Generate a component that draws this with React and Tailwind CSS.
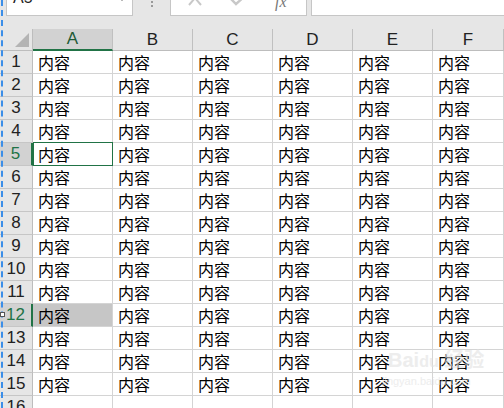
import React from "react";

const cols = ["A", "B", "C", "D", "E", "F"];
const rows = Array.from({ length: 16 }, (_, i) => i + 1);

export default function App() {
  return (
    <div
      className="relative w-[504px] h-[408px] overflow-hidden bg-white"
      style={{ fontFamily: '"Liberation Sans", "Noto Sans CJK SC", sans-serif' }}
    >
      {/* top toolbar */}
      <div className="h-[29px] bg-[#e6e6e6] flex items-start">
        <div className="ml-[6px] w-[127px] h-[16px] bg-white border border-t-0 border-[#c6c6c6] relative overflow-hidden">
          <span className="absolute left-[6px] top-[-12px] text-[16px] text-[#222] leading-[20px]">A5</span>
          <span className="absolute right-[6px] top-[-4px] w-0 h-0 border-l-[4px] border-r-[4px] border-t-[5px] border-l-transparent border-r-transparent border-t-[#555]" />
        </div>
        <div className="w-[37px] h-[16px] flex justify-center">
          <div className="flex flex-col gap-[2px] mt-[1px]">
            <span className="w-[2px] h-[2px] bg-[#999]" />
            <span className="w-[2px] h-[2px] bg-[#999]" />
          </div>
        </div>
        <div className="w-[137px] h-[16px] bg-white border border-t-0 border-[#c6c6c6] relative overflow-hidden">
          <svg className="absolute left-[16px] top-[-4px]" width="16" height="10" viewBox="0 0 16 10">
            <path d="M2 9 L8 2 L14 9" stroke="#c8c8c8" strokeWidth="2" fill="none" />
          </svg>
          <svg className="absolute left-[58px] top-[-4px]" width="18" height="10" viewBox="0 0 18 10">
            <path d="M2 3 L7 8 L16 0" stroke="#c8c8c8" strokeWidth="2.4" fill="none" />
          </svg>
          <span
            className="absolute left-[104px] top-[-8px] text-[16px] italic text-[#777] leading-[20px]"
            style={{ fontFamily: '"Liberation Serif", serif' }}
          >
            fx
          </span>
        </div>
        <div className="ml-[4px] flex-1 h-[16px] bg-white border border-t-0 border-r-0 border-[#c6c6c6]" />
      </div>

      {/* sheet grid */}
      <div className="grid grid-cols-[33px_80px_80px_80px_80px_80px_71px]">
        {/* header row */}
        <div className="h-[22px] bg-[#e6e6e6] border-r border-b border-[#bdbdbd] relative">
          <svg className="absolute right-[3px] bottom-[3px]" width="14" height="14" viewBox="0 0 14 14">
            <path d="M14 0 L14 14 L0 14 Z" fill="#b4b4b4" />
          </svg>
        </div>
        {cols.map((c, i) => (
          <div
            key={c}
            className={
              "h-[22px] flex items-center justify-center text-[17px] border-r border-[#c0c0c0] " +
              (i === 0
                ? "bg-[#d2d2d2] text-[#1e5a36] border-b-2 border-b-[#217346]"
                : "bg-[#e6e6e6] text-[#222] border-b border-b-[#bdbdbd]")
            }
          >
            {c}
          </div>
        ))}

        {rows.map((r) => {
          const hl = r === 5 || r === 12;
          return (
            <React.Fragment key={r}>
              <div
                className={
                  "h-[23px] flex items-center justify-center text-[17px] border-b border-[#c6c6c6] " +
                  (hl
                    ? "bg-[#d2d2d2] text-[#217346] border-r-2 border-r-[#217346]"
                    : "bg-[#e6e6e6] text-[#222] border-r border-r-[#bdbdbd]")
                }
              >
                {r}
              </div>
              {cols.map((c, i) => {
                let extra = "";
                if (r === 12 && i === 0) extra = " bg-[#c6c6c6]";
                return (
                  <div
                    key={c}
                    className={
                      "h-[23px] relative border-r border-b border-[#d4d4d4] pl-[5px] flex items-center text-[16px] text-black" +
                      extra
                    }
                    style={{ fontFamily: '"Noto Sans CJK SC", sans-serif' }}
                  >
                    {r <= 15 ? "内容" : ""}
                    {r === 5 && i === 0 && (
                      <span className="absolute left-0 top-[-1px] right-[-1px] bottom-[-1px] border border-[#217346]" />
                    )}
                  </div>
                );
              })}
            </React.Fragment>
          );
        })}
      </div>

      {/* selection marquee at left */}
      <div className="absolute left-[1px] top-0 h-[408px] border-l-2 border-dashed border-[#3b8ee8]" />
      <div className="absolute left-0 top-[312px] w-[5px] h-[5px] bg-white border border-[#555]" />

      {/* watermark */}
      <div className="absolute left-[388px] top-[350px] text-[20px] font-bold text-[#e2e2e2] opacity-60 leading-none pointer-events-none">
        Bai<span className="text-[16px]">du</span> 经验
      </div>
      <div className="absolute left-[382px] top-[376px] text-[11px] text-[#e2e2e2] opacity-60 leading-none pointer-events-none">
        jingyan.baidu.com
      </div>
    </div>
  );
}
